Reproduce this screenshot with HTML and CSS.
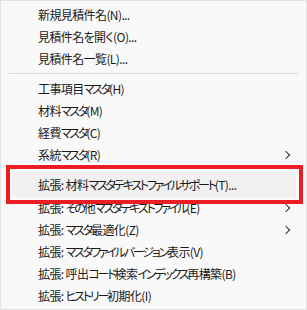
FILE: index.html
```html
<!DOCTYPE html>
<html lang="ja">
<head>
  <meta charset="UTF-8">
  <title>メニュー</title>
  <link rel="stylesheet" href="styles.css">
</head>
<body>
  <div class="menu">
    <div class="item">新規見積件名(N)...</div>
    <div class="item">見積件名を開く(O)...</div>
    <div class="item">見積件名一覧(L)...</div>
    <div class="separator"></div>
    <div class="item">工事項目<span class="kana">マスタ</span>(H)</div>
    <div class="item">材料<span class="kana">マスタ</span>(M)</div>
    <div class="item">経費<span class="kana">マスタ</span>(C)</div>
    <div class="item sub">系統<span class="kana">マスタ</span>(R)</div>
    <div class="gap"></div>
    <div class="item hover">拡張: 材料<span class="kana">マスタテキストファイルサポート</span>(T)...</div>
    <div class="item sub">拡張: <span class="kana">その</span>他<span class="kana">マスタテキストファイル</span>(E)</div>
    <div class="item sub">拡張: <span class="kana">マスタ</span>最適化(Z)</div>
    <div class="item">拡張: <span class="kana">マスタファイルバージョン</span>表示(V)</div>
    <div class="item">拡張: 呼出<span class="kana">コード</span>検索<span class="kana">インデックス</span>再構築(B)</div>
    <div class="item">拡張: <span class="kana">ヒストリー</span>初期化(I)</div>

    <!-- red marker drawn over the menu -->
    <div class="marker"></div>
  </div>
</body>
</html>
```

FILE: styles.css
```css
body {
  margin: 0;
  background-color: #ffffff;
  font-family: "Noto Sans CJK JP", "Noto Sans", sans-serif;
}

.menu {
  position: relative;
  box-sizing: border-box;
  width: 307px;
  height: 310px;
  padding-top: 3px;
  background-color: #f9f9f9;
  border: 1px solid #e3e3e3;
}

.item {
  position: relative;
  height: 22px;
  line-height: 22px;
  padding-left: 37px;
  font-size: 12px;
  font-feature-settings: "palt";
  letter-spacing: -0.6px;
  color: #1a1a1a;
  white-space: nowrap;
}

/* katakana is narrow in the original UI font */
.kana {
  letter-spacing: -2.2px;
}

/* submenu chevron */
.item.sub::after {
  content: "";
  position: absolute;
  right: 17px;
  top: 8px;
  width: 5px;
  height: 5px;
  border-top: 1px solid #333333;
  border-right: 1px solid #333333;
  transform: rotate(45deg);
}

.item.hover {
  height: 25px;
  line-height: 25px;
  margin: 0 10px 0 11px;
  padding-left: 26px;
  background-color: #f0f0f0;
}

.separator {
  height: 1px;
  margin: 3px 8px 4px 8px;
  background-color: #d9d9d9;
}

.gap {
  height: 6px;
}

.marker {
  position: absolute;
  left: 5px;
  top: 164px;
  width: 289px;
  height: 31px;
  border: 4px solid #ec1c24;
}
```
